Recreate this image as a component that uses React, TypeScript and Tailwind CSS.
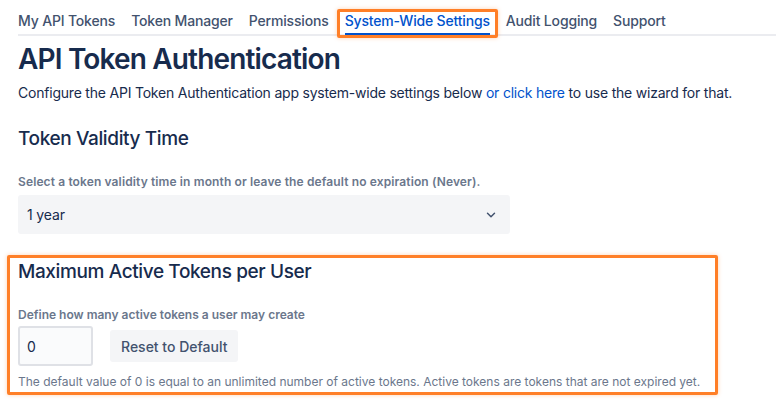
import { ChevronDown } from 'lucide-react';

const tabs = ['My API Tokens', 'Token Manager', 'Permissions', 'System-Wide Settings', 'Audit Logging', 'Support'];

const font = { fontFamily: 'Inter, "Noto Sans", "Liberation Sans", sans-serif' };

function Tabs() {
  return (
    <div className="flex gap-[16px] h-[36px] border-b-2 border-[#ebecf0]">
      {tabs.map((t) => {
        const active = t === 'System-Wide Settings';
        return (
          <div key={t} className="relative">
            <div
              className={
                'pt-[11px] leading-[20px] text-[14px] font-medium tracking-[-0.012em] ' +
                (active ? 'text-[#0052cc]' : 'text-[#42526e]')
              }
            >
              {t}
            </div>
            {active && (
              <>
                <div className="absolute left-0 right-0 bottom-[-1px] h-[2px] bg-[#0052cc]" />
                <div className="absolute left-[-8px] right-[-8px] top-[9px] h-[29px] border-[3px] border-[#ff7f27] rounded-[2px] shadow-[0_0_4px_rgba(255,127,39,0.35)]" />
              </>
            )}
          </div>
        );
      })}
    </div>
  );
}

export default function App() {
  return (
    <div className="bg-white w-[776px] h-[404px] overflow-hidden pl-[18px]" style={font}>
      <Tabs />

      <h1 className="mt-[7px] text-[28px] leading-[32px] font-semibold text-[#172b4d] tracking-[-0.03em]">
        API Token Authentication
      </h1>
      <p className="mt-[8px] text-[14px] leading-[20px] text-[#172b4d] tracking-[-0.015em]">
        Configure the API Token Authentication app system-wide settings below{' '}
        <a className="text-[#0052cc]">or click here</a> to use the wizard for that.
      </p>

      <h2 className="mt-[24px] text-[19px] leading-[24px] font-medium text-[#172b4d] tracking-[-0.02em]">
        Token Validity Time
      </h2>
      <div className="mt-[23px] text-[12px] leading-[16px] font-semibold text-[#6b778c] tracking-[0.01em]">
        Select a token validity time in month or leave the default no expiration (Never).
      </div>
      <div className="mt-[5px] w-[492px] h-[39px] bg-[#f4f5f7] rounded-[3px] flex items-center justify-between pl-[9px] pr-[12px] text-[14px] text-[#172b4d] tracking-[-0.01em]">
        <span>1 year</span>
        <ChevronDown size={14} strokeWidth={2.5} className="text-[#42526e]" />
      </div>

      <section className="mt-[21px] ml-[-11px] w-[711px] h-[140px] border-[3px] border-[#ff7f27] rounded-[2px] shadow-[0_0_4px_rgba(255,127,39,0.35)] pl-[8px] pt-[2px]">
        <h2 className="text-[19px] leading-[24px] font-medium text-[#172b4d] tracking-[-0.02em]">
          Maximum Active Tokens per User
        </h2>
        <div className="mt-[23px] text-[12px] leading-[16px] font-semibold text-[#6b778c]">
          Define how many active tokens a user may create
        </div>
        <div className="mt-[3px] flex items-center gap-[17px]">
          <div className="w-[75px] h-[40px] border-2 border-[#dfe1e6] bg-[#fafbfc] rounded-[3px] flex items-center pl-[7px] text-[14px] text-[#172b4d]">
            0
          </div>
          <button className="h-[32px] px-[11px] bg-[#f4f5f7] rounded-[3px] text-[14px] font-medium text-[#42526e]">
            Reset to Default
          </button>
        </div>
        <div className="mt-[8px] text-[12px] leading-[16px] text-[#6b778c]">
          The default value of 0 is equal to an unlimited number of active tokens. Active tokens are tokens that are not expired yet.
        </div>
      </section>
    </div>
  );
}
